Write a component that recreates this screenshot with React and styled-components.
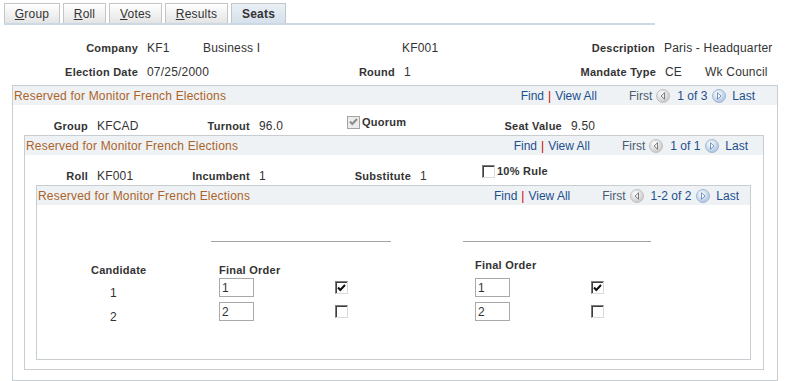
import React from 'react';
import styled, { createGlobalStyle } from 'styled-components';

const GlobalStyle = createGlobalStyle`
  body {
    margin: 0;
    background: #fff;
    font-family: "Liberation Sans", Arial, sans-serif;
    color: #333;
  }
  * { box-sizing: border-box; }
`;

const Page = styled.div`
  width: 787px;
  height: 381px;
  overflow: hidden;
`;

const TabBar = styled.div`
  display: flex;
  gap: 3px;
  margin-left: 4px;
  padding-top: 3px;
  width: 651px;
  border-bottom: 2px solid #cbd9e7;
`;

const Tab = styled.div`
  width: ${p => p.w}px;
  height: 20px;
  display: flex;
  align-items: center;
  justify-content: center;
  border: 1px solid #c3c6c9;
  border-bottom: none;
  background: ${p => p.active
    ? 'linear-gradient(#e9eff5, #d6e1ec)'
    : 'linear-gradient(#ffffff, #e4e4e4)'};
  font-size: 12px;
  font-weight: ${p => (p.active ? 'bold' : 'normal')};
  letter-spacing: 0.2px;
  color: #333;

  u { text-decoration: underline; }
`;

const Summary = styled.div`
  padding-top: 11px;
`;

const InfoRow = styled.div`
  display: flex;
  align-items: center;
  height: 24px;
`;

const Label = styled.div`
  flex: none;
  width: ${p => p.w}px;
  padding-right: 9px;
  text-align: right;
  font-size: 11px;
  font-weight: bold;
  letter-spacing: 0.25px;
  color: #333;
  white-space: nowrap;
`;

const Value = styled.div`
  flex: none;
  width: ${p => (p.w ? `${p.w}px` : 'auto')};
  font-size: 12px;
  letter-spacing: 0.2px;
  color: #333;
  white-space: nowrap;
`;

const Box = styled.div`
  border: 1px solid #c8cdd2;
  margin: ${p => p.m};
`;

const GridHeader = styled.div`
  display: flex;
  align-items: center;
  height: 19px;
  padding: 0 ${p => p.pr}px 0 1px;
  background: #eef2f4;
  font-size: 12px;
  white-space: nowrap;
`;

const Title = styled.div`
  flex: 1;
  color: #ad6228;
  letter-spacing: 0.2px;
`;

const Link = styled.span`
  color: #1d4f8e;
`;

const Sep = styled.span`
  color: #cc0000;
  margin: 0 4px;
`;

const Pager = styled.div`
  display: flex;
  align-items: center;
  margin-left: 32px;
  color: #1d4f8e;
`;

const Muted = styled.span`
  color: #4c5b70;
`;

const IconSlot = styled.span`
  display: flex;
  margin: ${p => p.m};
`;

const FieldRow = styled.div`
  display: flex;
  align-items: flex-start;
  padding-top: 13px;
  line-height: 16px;
`;

const CheckField = styled.div`
  flex: none;
  width: ${p => (p.w ? `${p.w}px` : 'auto')};
  display: flex;
  align-items: center;
  gap: 2px;
  margin-top: ${p => p.lift}px;
  font-size: 11px;
  font-weight: bold;
  letter-spacing: 0.25px;
  color: #333;
`;

const Check = styled.span`
  flex: none;
  width: 13px;
  height: 13px;
  display: flex;
  align-items: center;
  justify-content: center;
  border: 1px solid;
  border-color: ${p => (p.disabled ? '#a4a4a4' : '#7c7c7c #dadada #dadada #7c7c7c')};
  box-shadow: ${p => (p.disabled ? 'none' : 'inset 1px 1px 0 #3f3f3f')};
  background: ${p => (p.disabled ? '#ececec' : '#fff')};
  margin-top: ${p => p.mt || 0}px;
`;

const SeatGrid = styled.div`
  display: flex;
  padding: 0 0 30px 54px;
`;

const CandidateCol = styled.div`
  flex: none;
  width: 120px;
  padding-top: 57px;
`;

const ColHead = styled.div`
  height: 16px;
  line-height: 16px;
  font-size: 11px;
  font-weight: bold;
  letter-spacing: 0.25px;
  color: #333;
  margin-top: ${p => p.mt || 0}px;
  padding-left: ${p => p.pl || 0}px;
`;

const Numbers = styled.div`
  margin-top: 3px;
  padding-left: 19px;
`;

const NumberCell = styled.div`
  height: 24px;
  line-height: 24px;
  font-size: 12px;
  color: #333;
`;

const Group = styled.div`
  flex: none;
  width: ${p => p.w}px;
  margin-left: ${p => p.ml || 0}px;
  padding-top: 36px;
`;

const Rule = styled.div`
  border-top: 1px solid #a3a3a3;
`;

const EntryRows = styled.div`
  margin-top: ${p => p.mt || 0}px;
  padding-left: ${p => p.pl}px;
`;

const EntryRow = styled.div`
  display: flex;
  align-items: flex-start;
  height: 24px;
`;

const OrderInput = styled.input`
  width: 35px;
  height: 19px;
  border: 1px solid #a9a9a9;
  padding: 0 2px;
  font-family: "Liberation Sans", Arial, sans-serif;
  font-size: 12px;
  color: #333;
  background: #fff;
  outline: none;
`;

const Tick = ({ color }) => (
  <svg width="9" height="8" viewBox="0 0 9 8">
    <path d="M1 3.5 L3.3 6 L8 1" fill="none" stroke={color} strokeWidth="2" />
  </svg>
);

const PagerIcon = ({ dir }) => {
  const next = dir === 'next';
  return (
    <svg width="14" height="14" viewBox="0 0 14 14">
      <defs>
        <radialGradient id={`pg-${dir}`} cx="40%" cy="35%" r="70%">
          <stop offset="0" stopColor="#ffffff" />
          <stop offset="1" stopColor={next ? '#a7c0de' : '#c4c4c4'} />
        </radialGradient>
      </defs>
      <circle cx="7" cy="7" r="6.5" fill={`url(#pg-${dir})`} stroke={next ? '#a2b8d3' : '#c2c2c2'} />
      {next ? (
        <path d="M5.5 3.8 L9 7 L5.5 10.2 Z" fill="#ffffff" stroke="#4f7bb0" strokeWidth="0.8" />
      ) : (
        <path d="M8.5 3.8 L5 7 L8.5 10.2 Z" fill="#f4f4f4" stroke="#606060" strokeWidth="0.8" />
      )}
    </svg>
  );
};

const Header = ({ pr, count }) => (
  <GridHeader pr={pr}>
    <Title>Reserved for Monitor French Elections</Title>
    <Link>Find</Link>
    <Sep>|</Sep>
    <Link>View All</Link>
    <Pager>
      <Muted>First</Muted>
      <IconSlot m="0 7px 0 4px"><PagerIcon dir="prev" /></IconSlot>
      <span>{count}</span>
      <IconSlot m="0 6px 0 5px"><PagerIcon dir="next" /></IconSlot>
      <span>Last</span>
    </Pager>
  </GridHeader>
);

const tabs = [
  { key: 'G', rest: 'roup', w: 56 },
  { key: 'R', rest: 'oll', w: 43 },
  { key: 'V', rest: 'otes', w: 53 },
  { key: 'R', rest: 'esults', w: 63 },
];

const seats = [
  { order: '1', checked: true },
  { order: '2', checked: false },
];

const SeatColumn = ({ w, ml, headMt, headPl, rowsMt }) => (
  <Group w={w} ml={ml}>
    <Rule />
    <ColHead mt={headMt} pl={headPl}>Final Order</ColHead>
    <EntryRows mt={rowsMt} pl={headPl}>
      {seats.map(s => (
        <EntryRow key={s.order}>
          <OrderInput readOnly value={s.order} />
          <Check mt={3} style={{ marginLeft: 81 }}>
            {s.checked && <Tick color="#111" />}
          </Check>
        </EntryRow>
      ))}
    </EntryRows>
  </Group>
);

export default function App() {
  return (
    <Page>
      <GlobalStyle />
      <TabBar>
        {tabs.map(t => (
          <Tab key={t.rest} w={t.w}>
            <span><u>{t.key}</u>{t.rest}</span>
          </Tab>
        ))}
        <Tab w={55} active>Seats</Tab>
      </TabBar>

      <Summary>
        <InfoRow>
          <Label w={147}>Company</Label>
          <Value w={56}>KF1</Value>
          <Value w={199}>Business I</Value>
          <Value w={100}>KF001</Value>
          <Label w={162}>Description</Label>
          <Value>Paris - Headquarter</Value>
        </InfoRow>
        <InfoRow>
          <Label w={147}>Election Date</Label>
          <Value w={103}>07/25/2000</Value>
          <Label w={154}>Round</Label>
          <Value w={98}>1</Value>
          <Label w={163}>Mandate Type</Label>
          <Value w={40}>CE</Value>
          <Value>Wk Council</Value>
        </InfoRow>
      </Summary>

      <Box m="1px 9px 0 12px">
        <Header pr={22} count="1 of 3" />
        <FieldRow>
          <Label w={84}>Group</Label>
          <Value w={73}>KFCAD</Value>
          <Label w={89}>Turnout</Label>
          <Value w={88}>96.0</Value>
          <CheckField w={103} lift={-4}>
            <Check disabled><Tick color="#8c8c8c" /></Check>
            Quorum
          </CheckField>
          <Label w={121}>Seat Value</Label>
          <Value>9.50</Value>
        </FieldRow>

        <Box m="1px 13px 10px 11px">
          <Header pr={15} count="1 of 1" />
          <FieldRow>
            <Label w={72}>Roll</Label>
            <Value w={73}>KF001</Value>
            <Label w={89}>Incumbent</Label>
            <Value w={71}>1</Value>
            <Label w={90}>Substitute</Label>
            <Value w={62}>1</Value>
            <CheckField lift={-5}>
              <Check />
              10% Rule
            </CheckField>
          </FieldRow>

          <Box m="1px 12px 9px 11px">
            <Header pr={11} count="1-2 of 2" />
            <SeatGrid>
              <CandidateCol>
                <ColHead>Candidate</ColHead>
                <Numbers>
                  {seats.map(s => (
                    <NumberCell key={s.order}>{s.order}</NumberCell>
                  ))}
                </Numbers>
              </CandidateCol>
              <SeatColumn w={180} headMt={20} headPl={8} rowsMt={0} />
              <SeatColumn w={188} ml={72} headMt={15} headPl={12} rowsMt={5} />
            </SeatGrid>
          </Box>
        </Box>
      </Box>
    </Page>
  );
}
